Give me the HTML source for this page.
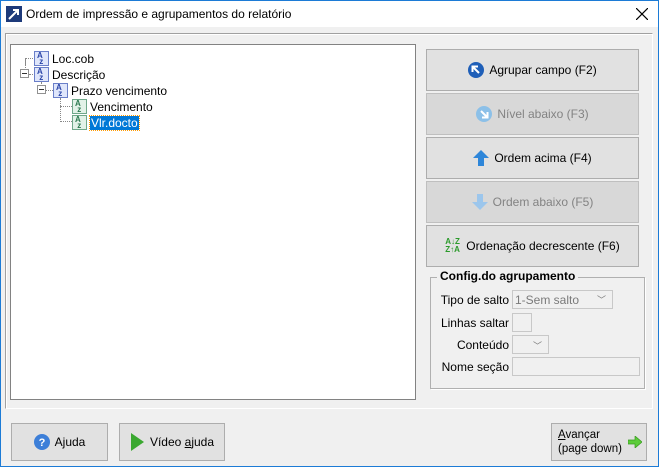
<!DOCTYPE html><html><head><style>
*{box-sizing:border-box;margin:0;padding:0}
body{width:659px;height:467px;font-family:"Liberation Sans",sans-serif;font-size:12px;color:#000;background:#f0f0f0;position:relative;overflow:hidden}
.win{position:absolute;inset:0;border:1px solid #1c7bd6;pointer-events:none;z-index:5}
.title{position:absolute;left:1px;top:1px;width:657px;height:26px;background:#fff}
.abs{position:absolute}
.btn{position:absolute;background:#e1e1e1;border:1px solid #adadad;display:flex;align-items:center;justify-content:center;gap:5px;white-space:nowrap}
.dis{background:#d8d8d8;border-color:#bfbfbf;color:#838383}
.tree{position:absolute;left:10px;top:44px;width:406px;height:356px;background:#fff;border:1px solid #828282}
.ic{position:absolute;width:15px;height:15px;border:1px solid #6a7fc9;background:#dfe6fb;font-size:8px;color:#2a45a8;font-weight:bold;line-height:6px;padding-left:2px;padding-top:1px}
.ic.g{border-color:#6fa88a;background:#e2f2e8;color:#2c7a50}
.lbl{position:absolute;font-size:12px}
.dot{position:absolute;border-color:#888;border-style:dotted;border-width:0}
.pm{position:absolute;width:9px;height:9px;border:1px solid #919191;background:#fff}
.pm:after{content:"";position:absolute;left:1px;top:3px;width:5px;height:1px;background:#333}
.field{position:absolute;border:1px solid #c8c8c8;background:#f0f0f0;color:#7a7a7a;white-space:nowrap}
.r{position:absolute;text-align:right;width:80px}
</style></head><body><div class="win"></div>
<div class="title">
<svg class="abs" style="left:5px;top:5px" width="16" height="16"><rect width="16" height="16" fill="#1d3a7a"/><path d="M3 13 L12 4 M7 4 H12 V9" stroke="#fff" stroke-width="2" fill="none"/></svg>
<div class="abs" style="left:25px;top:6px;font-size:12px">Ordem de impressão e agrupamentos do relatório</div>
<svg class="abs" style="left:635px;top:7px" width="12" height="12"><path d="M0 0L12 12M12 0L0 12" stroke="#000" stroke-width="1.2"/></svg>
</div>
<div class="abs" style="left:5px;top:33px;width:648px;height:376px;border:1px solid #a0a0a0;border-right-color:#fff;border-bottom-color:#fff;box-shadow:inset 1px 1px 0 #fff"></div>
<div class="tree">
<div class="dot" style="left:14px;top:13px;width:10px;height:7px;border-left-width:1px;border-top-width:1px"></div>
<div class="dot" style="left:14px;top:13px;width:1px;height:16px;border-left-width:1px"></div>
<div class="dot" style="left:18px;top:29px;width:6px;border-top-width:1px"></div>
<div class="pm" style="left:9px;top:24px"></div>
<div class="ic" style="left:23px;top:6px">A<br>&nbsp;z</div><div class="lbl" style="left:41px;top:7px">Loc.cob</div>
<div class="ic" style="left:23px;top:22px">A<br>&nbsp;z</div><div class="lbl" style="left:41px;top:23px">Descrição</div>
<div class="dot" style="left:30px;top:37px;height:8px;border-left-width:1px"></div>
<div class="pm" style="left:26px;top:40px"></div>
<div class="dot" style="left:35px;top:45px;width:7px;border-top-width:1px"></div>
<div class="ic" style="left:42px;top:38px">A<br>&nbsp;z</div><div class="lbl" style="left:60px;top:39px">Prazo vencimento</div>
<div class="dot" style="left:49px;top:53px;width:12px;height:24px;border-left-width:1px;border-bottom-width:1px"></div>
<div class="dot" style="left:49px;top:61px;width:12px;border-top-width:1px"></div>
<div class="ic g" style="left:61px;top:54px">A<br>&nbsp;z</div><div class="lbl" style="left:79px;top:55px">Vencimento</div>
<div class="ic g" style="left:61px;top:70px">A<br>&nbsp;z</div><div class="lbl" style="left:79px;top:71px;background:#0078d7;color:#fff;padding:0 1px;outline:1px dotted #f90">Vlr.docto</div>
</div>
<div class="btn" style="left:426px;top:49px;width:213px;height:42px"><svg width="16" height="16"><circle cx="8" cy="8" r="8" fill="#1f5fb8"/><path d="M11 11L5 5M4.5 10V4.5H10" stroke="#fff" stroke-width="2" fill="none"/></svg>Agrupar campo (F2)</div>
<div class="btn dis" style="left:426px;top:93px;width:213px;height:42px"><svg width="16" height="16"><circle cx="8" cy="8" r="8" fill="#8cc0e8"/><path d="M5 5L11 11M11.5 6V11.5H6" stroke="#fff" stroke-width="2" fill="none"/></svg>Nível abaixo (F3)</div>
<div class="btn" style="left:426px;top:137px;width:213px;height:42px"><svg width="16" height="16"><path d="M8 0L16 8H11V16H5V8H0Z" fill="#2e86d9"/></svg>Ordem acima (F4)</div>
<div class="btn dis" style="left:426px;top:181px;width:213px;height:42px"><svg width="16" height="16"><path d="M8 16L16 8H11V0H5V8H0Z" fill="#9cc6ec"/></svg>Ordem abaixo (F5)</div>
<div class="btn" style="left:426px;top:225px;width:213px;height:42px"><span style="font-size:8px;font-weight:bold;color:#2b9a2b;line-height:8px;width:16px">A↓Z<br>Z↑A</span>Ordenação decrescente (F6)</div>
<div class="abs" style="left:430px;top:277px;width:215px;height:112px;border:1px solid #b0b0b0;box-shadow:1px 1px 0 #fff"></div>
<div class="abs" style="left:437px;top:269px;background:#f0f0f0;padding:0 3px;font-weight:bold;font-size:12px">Config.do agrupamento</div>
<div class="r" style="left:429px;top:293px">Tipo de salto</div>
<div class="field" style="left:512px;top:290px;width:101px;height:19px;padding:2px 2px;font-size:12px">1-Sem salto<span style="position:absolute;right:6px;top:2px;font-size:9px">﹀</span></div>
<div class="r" style="left:429px;top:316px">Linhas saltar</div>
<div class="field" style="left:512px;top:313px;width:20px;height:19px"></div>
<div class="r" style="left:429px;top:338px">Conteúdo</div>
<div class="field" style="left:512px;top:335px;width:37px;height:19px"><span style="position:absolute;right:6px;top:3px;font-size:9px">﹀</span></div>
<div class="r" style="left:429px;top:360px">Nome seção</div>
<div class="field" style="left:512px;top:357px;width:128px;height:19px"></div>
<div class="btn" style="left:11px;top:423px;width:97px;height:38px"><svg width="16" height="16"><circle cx="8" cy="8" r="8" fill="#3d7fd8"/><text x="8" y="12" font-size="11" fill="#fff" text-anchor="middle" font-weight="bold" font-family="Liberation Sans">?</text></svg><span>A<u>j</u>uda</span></div>
<div class="btn" style="left:119px;top:423px;width:106px;height:38px"><svg width="15" height="18"><path d="M1 0L14 9L1 18Z" fill="#3aa830"/></svg><span>Vídeo <u>a</u>juda</span></div>
<div class="btn" style="left:551px;top:423px;width:96px;height:38px;justify-content:flex-start;padding-left:6px;gap:6px"><span style="line-height:14px;font-size:11.5px"><u>A</u>vançar<br>(page down)</span><svg width="14" height="12"><path d="M0 4H7V0L14 6L7 12V8H0Z" fill="#5ccc3a" stroke="#3a9a22" stroke-width=".7"/></svg></div>
</body></html>
